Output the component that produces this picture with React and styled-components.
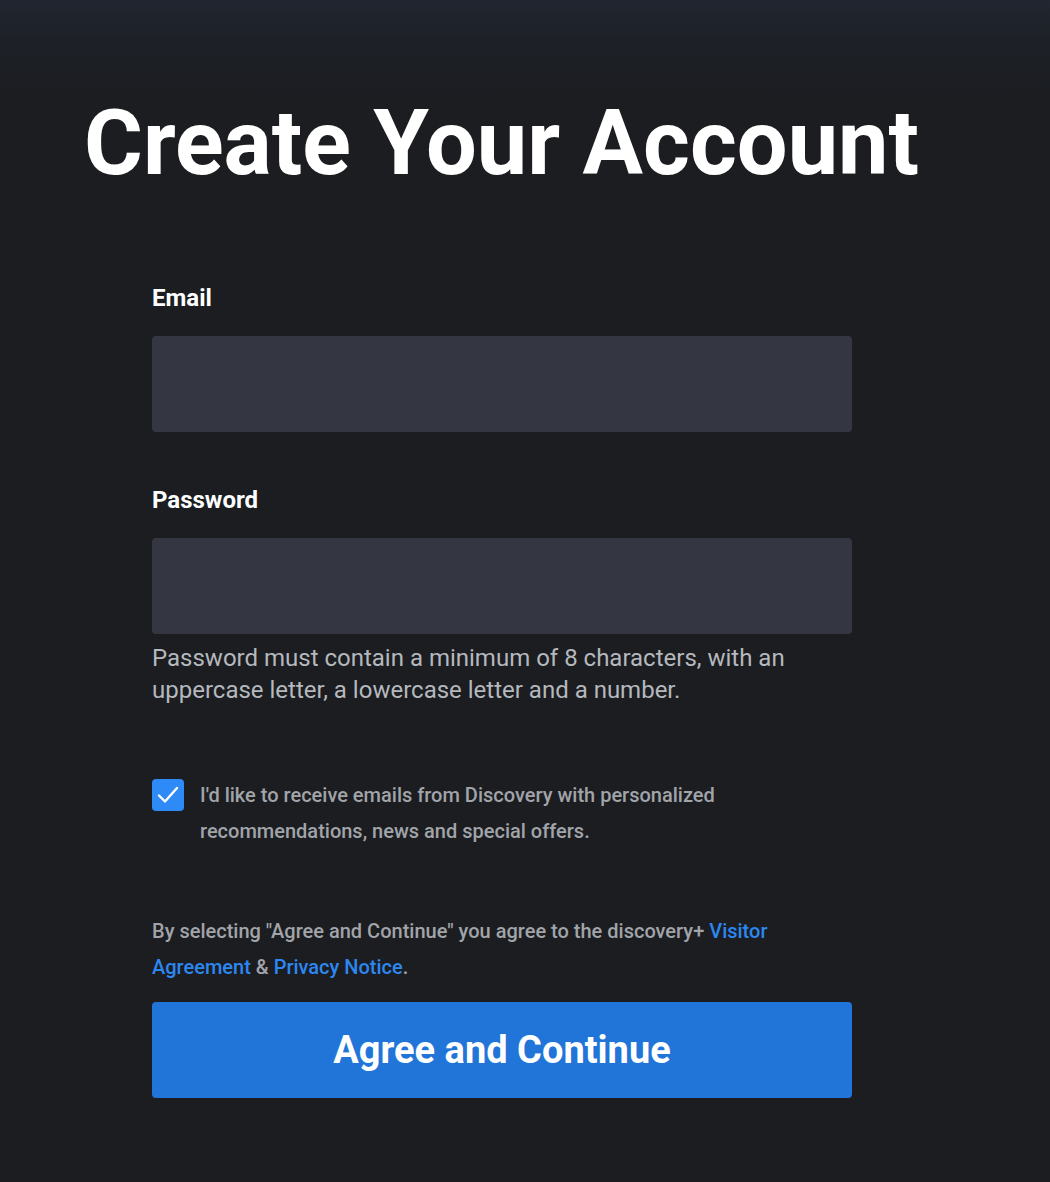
import styled, { createGlobalStyle } from "styled-components";

const GlobalStyle = createGlobalStyle`
  html, body {
    margin: 0;
    padding: 0;
    background: #1b1d21;
  }
  body {
    font-family: Roboto, "Liberation Sans", sans-serif;
  }
`;

const Page = styled.div`
  min-height: 1182px;
  background: linear-gradient(180deg, #212630 0px, #1d2026 45px, #1b1d21 100px);
  color: #fff;
  box-sizing: border-box;
  padding: 96px 0 0 84px;
`;

const Title = styled.h1`
  margin: 0;
  font-size: 90px;
  font-weight: 700;
  line-height: 96px;
`;

const Form = styled.form`
  width: 700px;
  margin: 92px 0 0 68px;
  display: flex;
  flex-direction: column;
`;

const Label = styled.label`
  font-size: 24px;
  font-weight: 700;
  line-height: 28px;
  margin-top: ${(p) => p.$top || 0}px;
`;

const Input = styled.input`
  margin-top: 24px;
  height: 96px;
  border: none;
  border-radius: 4px;
  background: #343741;
  color: #fff;
  font-size: 22px;
  padding: 0 20px;
  outline: none;
`;

const Hint = styled.p`
  margin: 8px 0 0;
  font-size: 24px;
  line-height: 32px;
  color: #b5b8bd;
`;

const CheckRow = styled.div`
  display: flex;
  gap: 16px;
  margin-top: 71px;
`;

const Box = styled.span`
  flex: 0 0 32px;
  height: 32px;
  margin-top: 2px;
  border-radius: 4px;
  background: #2e8af7;
  display: flex;
  align-items: center;
  justify-content: center;
`;

const Small = styled.p`
  margin: 0;
  font-size: 20px;
  font-weight: 500;
  line-height: 36px;
  color: #a1a4a9;
  margin-top: ${(p) => p.$top || 0}px;
`;

const Link = styled.a`
  color: #2d87f0;
  text-decoration: none;
`;

const Button = styled.button`
  margin-top: 17px;
  height: 96px;
  border: none;
  border-radius: 4px;
  background: #2175d9;
  color: #fff;
  font-family: Roboto, "Liberation Sans", sans-serif;
  font-size: 38px;
  font-weight: 700;
  cursor: pointer;
`;

const App = () => {
  return (
    <Page>
      <GlobalStyle />
      <Title>Create Your Account</Title>
      <Form onSubmit={(e) => e.preventDefault()}>
        <Label>Email</Label>
        <Input type="email" />
        <Label $top={54}>Password</Label>
        <Input type="password" />
        <Hint>
          Password must contain a minimum of 8 characters, with an uppercase
          letter, a lowercase letter and a number.
        </Hint>
        <CheckRow>
          <Box>
            <svg width="24" height="24" viewBox="0 0 24 24" fill="none">
              <path
                d="M3 12.5l6 6L21 5"
                stroke="#fff"
                strokeWidth="2.4"
                strokeLinecap="round"
                strokeLinejoin="round"
              />
            </svg>
          </Box>
          <Small>
            I'd like to receive emails from Discovery with personalized
            recommendations, news and special offers.
          </Small>
        </CheckRow>
        <Small $top={64}>
          By selecting "Agree and Continue" you agree to the discovery+{" "}
          <Link href="#">Visitor Agreement</Link> &amp;{" "}
          <Link href="#">Privacy Notice</Link>.
        </Small>
        <Button type="submit">Agree and Continue</Button>
      </Form>
    </Page>
  );
};

export default App;
